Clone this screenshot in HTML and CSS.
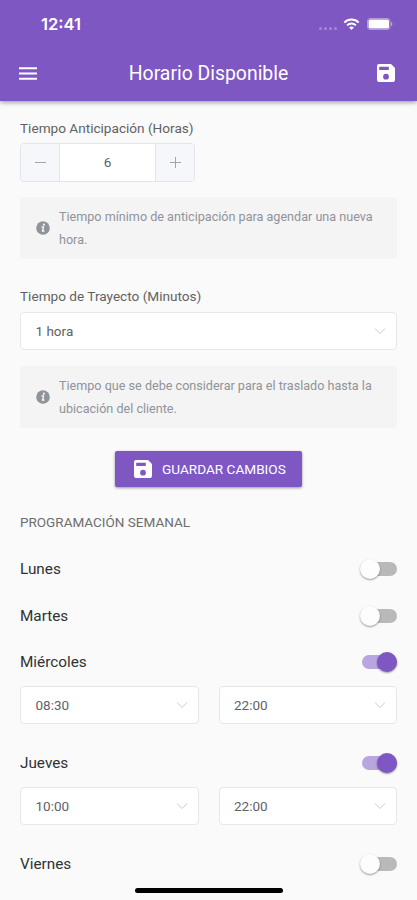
FILE: index.html
```html
<!DOCTYPE html>
<html lang="es">
<head>
<meta charset="UTF-8" />
<meta name="viewport" content="width=device-width, initial-scale=1" />
<title>Horario Disponible</title>
<link rel="stylesheet" href="styles.css">
</head>
<body>

<svg class="defs" width="0" height="0">
  <symbol id="save" viewBox="0 0 18 18">
    <path fill-rule="evenodd" d="M2 0H14L18 4V16a2 2 0 0 1-2 2H2a2 2 0 0 1-2-2V2a2 2 0 0 1 2-2zM2.2 2.8v3.2h9.6V2.8zM9 9.8a2.9 2.9 0 1 0 0 5.8 2.9 2.9 0 0 0 0-5.8z" />
  </symbol>
  <symbol id="chevron" viewBox="0 0 12 8">
    <path d="M1 1.5L6 6.5L11 1.5" fill="none" stroke="currentColor" />
  </symbol>
  <symbol id="info" viewBox="0 0 14 14">
    <circle cx="7" cy="7" r="6.8" fill="#909399" />
    <circle cx="7.9" cy="3.7" r="1.1" fill="#f4f4f5" />
    <path d="M5.5 6.2Q7.6 5.1 7.5 6.3L6.5 9.9Q6.4 11 8.4 9.7" fill="none" stroke="#f4f4f5" stroke-width="1.4" />
  </symbol>
</svg>

<header class="header">
  <div class="status-bar">
    <span class="clock">12:41</span>
    <div class="status-icons">
      <span class="signal"><i></i><i></i><i></i><i></i></span>
      <svg class="wifi" viewBox="0 0 16 12">
        <g fill="none" stroke="#fff" stroke-width="2">
          <path d="M.8 4.6a10.2 10.2 0 0 1 14.4 0" />
          <path d="M3.6 7.4a6.2 6.2 0 0 1 8.8 0" />
        </g>
        <path d="M8 12L5.6 9.6a3.4 3.4 0 0 1 4.8 0z" fill="#fff" />
      </svg>
      <svg class="battery" viewBox="0 0 26 12">
        <rect x=".5" y=".5" width="22.5" height="11" rx="2.5" fill="none" stroke="#fff" stroke-opacity=".4" />
        <rect x="1.5" y="1.5" width="20.5" height="9" rx="1.5" fill="#fff" />
        <path d="M24 4v4q1.4-.6 1.4-2T24 4z" fill="#fff" fill-opacity=".5" />
      </svg>
    </div>
  </div>
  <div class="toolbar">
    <svg class="menu-icon" viewBox="0 0 18 13"><path d="M0 1.2h18M0 6.5h18M0 11.8h18" stroke="#fff" stroke-width="2" /></svg>
    <h1>Horario Disponible</h1>
    <svg class="save-icon"><use href="#save" /></svg>
  </div>
</header>

<main class="content">
  <section class="field">
    <label>Tiempo Anticipación (Horas)</label>
    <div class="stepper">
      <span class="step"><svg viewBox="0 0 11 11"><path d="M0 5.5h11" /></svg></span>
      <span class="value">6</span>
      <span class="step"><svg viewBox="0 0 11 11"><path d="M0 5.5h11M5.5 0v11" /></svg></span>
    </div>
    <div class="alert">
      <svg><use href="#info" /></svg>
      <p>Tiempo mínimo de anticipación para agendar una nueva<br>hora.</p>
    </div>
  </section>

  <section class="field">
    <label>Tiempo de Trayecto (Minutos)</label>
    <div class="select">1 hora<svg><use href="#chevron" /></svg></div>
    <div class="alert">
      <svg><use href="#info" /></svg>
      <p>Tiempo que se debe considerar para el traslado hasta la<br>ubicación del cliente.</p>
    </div>
  </section>

  <button class="save-btn"><svg><use href="#save" /></svg>GUARDAR CAMBIOS</button>

  <h2>PROGRAMACIÓN SEMANAL</h2>

  <div class="day"><span>Lunes</span><i class="toggle"></i></div>
  <div class="day"><span>Martes</span><i class="toggle"></i></div>
  <div class="day"><span>Miércoles</span><i class="toggle on"></i></div>
  <div class="hours">
    <div class="select">08:30<svg><use href="#chevron" /></svg></div>
    <div class="select">22:00<svg><use href="#chevron" /></svg></div>
  </div>
  <div class="day"><span>Jueves</span><i class="toggle on"></i></div>
  <div class="hours">
    <div class="select">10:00<svg><use href="#chevron" /></svg></div>
    <div class="select">22:00<svg><use href="#chevron" /></svg></div>
  </div>
  <div class="day"><span>Viernes</span><i class="toggle"></i></div>
</main>

<div class="home-indicator"></div>

</body>
</html>
```
FILE: styles.css
```css
* {
  box-sizing: border-box;
}
html, body {
  margin: 0; padding: 0;
  height: 900px;
  overflow: hidden;
  background: #fafafa;
  font-family: Roboto, sans-serif;
  color: #606266;
}
.defs {
  display: none;
}
h1, h2, p {
  margin: 0;
  font-weight: 400;
}
.header {
  height: 101px;
  background: #7e57c2;
  color: #fff;
  box-shadow: 0 1px 5px rgba(0, 0, 0, 0.45);
}
.status-bar {
  height: 46px;
  padding: 2px 24px 0 41px;
  display: flex;
  justify-content: space-between;
  align-items: center;
}
.clock {
  font-family: Inter, sans-serif;
  font-size: 16.5px;
  font-weight: 600;
}
.status-icons {
  display: flex;
  align-items: center;
}
.signal {
  display: flex;
  gap: 2px;
  margin: 8px 6px 0 0;
}
.signal i {
  width: 3px;
  height: 3px;
  border-radius: 50%;
  background: rgba(255, 255, 255, 0.3);
}
.wifi {
  width: 17px;
  height: 12px;
  margin-right: 7px;
}
.battery {
  width: 26px;
  height: 12px;
}
.toolbar {
  height: 54px;
  padding: 0 22px 0 19px;
  display: flex;
  align-items: center;
  justify-content: space-between;
}
.toolbar h1 {
  margin-left: 3px;
  font-size: 19.4px;
}
.menu-icon {
  width: 18px;
  height: 13px;
}
.save-icon {
  width: 18px;
  height: 18px;
  fill: #fff;
}
.content {
  padding: 16px 20px 0;
}
.field {
  margin-bottom: 26px;
}
.field label {
  display: block;
  height: 22px;
  line-height: 22px;
  margin-bottom: 4px;
  font-size: 13.6px;
}
.stepper {
  display: flex;
  width: 175px;
  height: 39px;
  background: #fff;
  border: 1px solid #e2e5ec;
  border-radius: 4px;
  overflow: hidden;
}
.step {
  width: 38px;
  background: #f5f7fa;
  display: flex;
  align-items: center;
  justify-content: center;
}
.step svg {
  width: 11px;
  height: 11px;
  stroke: #a3a5aa;
}
.value {
  flex: 1;
  border: solid #e2e5ec;
  border-width: 0 1px;
  line-height: 37px;
  text-align: center;
  font-size: 13.6px;
}
.alert {
  display: flex;
  align-items: center;
  height: 62px;
  margin-top: 15px;
  padding-left: 16px;
  background: #f4f4f5;
  border-radius: 3px;
  color: #909399;
}
.select + .alert {
  margin-top: 16px;
}
.alert svg {
  width: 14px;
  height: 14px;
  margin-right: 9px;
}
.alert p {
  font-size: 12.6px;
  line-height: 23px;
  white-space: nowrap;
}
.select {
  height: 38px;
  flex: 1;
  padding: 0 10px 0 14.5px;
  display: flex;
  align-items: center;
  justify-content: space-between;
  background: #fff;
  border: 1px solid #e6e7ea;
  border-radius: 4px;
  font-size: 13.5px;
}
.field .select {
  margin-top: 5px;
}
.select svg {
  width: 12px;
  height: 8px;
  color: #c8cbd1;
}
.save-btn {
  display: flex;
  align-items: center;
  width: 187px;
  height: 36px;
  margin: -3px auto 0;
  padding: 0 0 0 19px;
  border: 0;
  border-radius: 2px;
  background: #7e57c2;
  box-shadow: 0 1px 3px rgba(0, 0, 0, 0.4);
  color: #fff;
  font: 400 13.6px Roboto, sans-serif;
  white-space: nowrap;
}
.save-btn svg {
  width: 18px;
  height: 18px;
  margin-right: 10px;
  fill: #fff;
}
h2 {
  height: 20px;
  margin: 25px 0 14px;
  line-height: 20px;
  font-size: 13.5px;
  color: #6e6e70;
}
.day {
  display: flex;
  align-items: center;
  justify-content: space-between;
  height: 46.5px;
  font-size: 15.3px;
  color: #303133;
}
.toggle {
  position: relative;
  width: 35px;
  height: 14px;
  border-radius: 7px;
  background: #b9b9b9;
}
.toggle::before {
  content: "";
  position: absolute;
  left: -2px;
  top: -3px;
  width: 20px;
  height: 20px;
  border-radius: 50%;
  background: #fdfdfd;
  box-shadow: 0 1px 2px rgba(0, 0, 0, 0.4);
}
.toggle.on {
  background: #b9a5df;
}
.toggle.on::before {
  left: 15px;
  background: #7e57c2;
}
.hours {
  display: flex;
  gap: 20px;
  margin-bottom: 16px;
}
.hours .select {
  height: 38.5px;
}
.home-indicator {
  position: fixed;
  left: 135px;
  bottom: 7px;
  width: 148px;
  height: 5px;
  border-radius: 3px;
  background: #000;
}
```
